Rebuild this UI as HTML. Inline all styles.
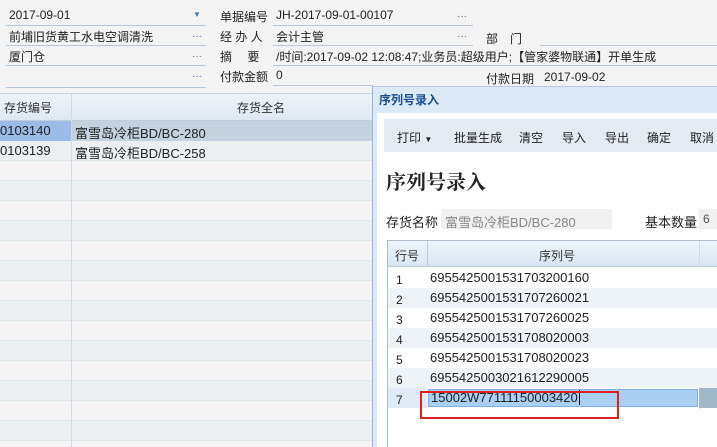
<!DOCTYPE html>
<html><head><meta charset="utf-8"><style>
*{margin:0;padding:0;box-sizing:border-box}
body{width:717px;height:447px;overflow:hidden;background:#f3f3f3;font-family:"Liberation Sans","Noto Sans CJK SC",sans-serif;font-size:12px;color:#222;position:relative}
.a{position:absolute;white-space:nowrap}
.ln{position:absolute;height:1px;background:#b7c7d6}
.dots{position:absolute;color:#4a6a9a;font-size:10px}
.sn{font-size:13px}
</style></head><body>
<div class="a" style="left:9px;top:8px">2017-09-01</div>
<div class="a" style="left:193px;top:10px;color:#4a7cc0;font-size:8px">▼</div>
<div class="ln" style="left:6px;top:25px;width:200px"></div>
<div class="a" style="left:9px;top:28px">前埔旧货黄工水电空调清洗</div>
<div class="dots" style="left:192px;top:31px">···</div>
<div class="ln" style="left:6px;top:45px;width:200px"></div>
<div class="a" style="left:9px;top:48px">厦门仓</div>
<div class="dots" style="left:192px;top:51px">···</div>
<div class="ln" style="left:6px;top:65px;width:200px"></div>
<div class="dots" style="left:192px;top:71px">···</div>
<div class="ln" style="left:6px;top:87px;width:200px"></div>

<div class="a" style="left:220px;top:8px">单据编号</div>
<div class="a" style="left:276px;top:8px">JH-2017-09-01-00107</div>
<div class="dots" style="left:457px;top:11px">···</div>
<div class="ln" style="left:273px;top:25px;width:200px"></div>
<div class="a" style="left:220px;top:28px">经 办 人</div>
<div class="a" style="left:276px;top:28px">会计主管</div>
<div class="dots" style="left:457px;top:31px">···</div>
<div class="ln" style="left:273px;top:45px;width:200px"></div>
<div class="a" style="left:486px;top:30px">部　门</div>
<div class="ln" style="left:540px;top:45px;width:177px"></div>
<div class="a" style="left:220px;top:48px">摘　 要</div>
<div class="a" style="left:276px;top:48px">/时间:2017-09-02 12:08:47;业务员:超级用户;【管家婆物联通】开单生成</div>
<div class="ln" style="left:273px;top:65px;width:444px"></div>
<div class="a" style="left:220px;top:68px">付款金额</div>
<div class="a" style="left:276px;top:68px">0</div>
<div class="ln" style="left:273px;top:85px;width:100px"></div>
<div class="a" style="left:486px;top:70px">付款日期</div>
<div class="a" style="left:544px;top:70px">2017-09-02</div>

<div class="a" style="left:0;top:93px;width:380px;height:28px;background:linear-gradient(#eef3f8,#dfe8f1);border-top:1px solid #c8d4df;border-bottom:1px solid #c0ccd8"></div>
<div class="a" style="left:4px;top:99px;color:#333">存货编号</div>
<div class="a" style="left:237px;top:99px;color:#333">存货全名</div>
<div class="a" style="left:0;top:121px;width:72px;height:20px;background:#9bbbe8"></div>
<div class="a" style="left:72px;top:121px;width:310px;height:20px;background:#c3d2de"></div>
<div class="a" style="left:0;top:141px;width:380px;height:306px;background:repeating-linear-gradient(#eceff1 0 19px,#dde3e8 19px 20px,#f4f4f4 20px 39px,#dde3e8 39px 40px)"></div>
<div class="a" style="left:71px;top:93px;width:1px;height:354px;background:#cfdae4"></div>
<div class="a sn" style="left:0;top:123px">0103140</div>
<div class="a sn" style="left:75px;top:123px">富雪岛冷柜BD/BC-280</div>
<div class="a sn" style="left:0;top:143px">0103139</div>
<div class="a sn" style="left:75px;top:143px">富雪岛冷柜BD/BC-258</div>

<div class="a" style="left:372px;top:86px;width:345px;height:361px;background:#dce9f6;border-left:1px solid #9cb8d8;border-top:1px solid #b5cbe2"></div>
<div class="a" style="left:379px;top:91px;color:#1d4f8f;font-weight:bold;font-size:12px">序列号录入</div>
<div class="a" style="left:377px;top:113px;width:340px;height:334px;background:#fff"></div>
<div class="a" style="left:384px;top:119px;width:333px;height:33px;background:#e4ebf2"></div>
<div class="a" style="left:397px;top:129px">打印 <span style="font-size:8px">▼</span></div>
<div class="a" style="left:454px;top:129px">批量生成</div>
<div class="a" style="left:519px;top:129px">清空</div>
<div class="a" style="left:562px;top:129px">导入</div>
<div class="a" style="left:605px;top:129px">导出</div>
<div class="a" style="left:647px;top:129px">确定</div>
<div class="a" style="left:690px;top:129px">取消</div>
<div class="a" style="left:386px;top:166px;font-size:20px;font-weight:bold;font-family:'Liberation Serif','Noto Serif CJK SC',serif">序列号录入</div>
<div class="a" style="left:386px;top:212px;font-size:13px">存货名称</div>
<div class="a" style="left:441px;top:209px;width:171px;height:20px;background:#f0f0f0"></div>
<div class="a" style="left:445px;top:212px;color:#888;font-size:13px">富雪岛冷柜BD/BC-280</div>
<div class="a" style="left:645px;top:212px;font-size:13px">基本数量</div>
<div class="a" style="left:699px;top:209px;width:18px;height:20px;background:#f0f0f0"></div>
<div class="a" style="left:703px;top:212px;color:#555">6</div>
<div class="a" style="left:387px;top:240px;width:330px;height:207px;border-left:1px solid #aebfd0;border-top:1px solid #aebfd0"></div>
<div class="a" style="left:388px;top:241px;width:329px;height:26px;background:linear-gradient(#eef4fa,#d9e6f2);border-bottom:1px solid #b9cadb"></div>
<div class="a" style="left:427px;top:241px;width:1px;height:26px;background:#b9cadb"></div>
<div class="a" style="left:699px;top:241px;width:1px;height:168px;background:#cfdce8"></div>
<div class="a" style="left:395px;top:247px;color:#333">行号</div>
<div class="a" style="left:539px;top:247px;color:#333">序列号</div>
<div class="a" style="left:388px;top:268px;width:329px;height:140px;background:repeating-linear-gradient(#fff 0 20px,#eef3f7 20px 40px)"></div>
<div class="a" style="left:388px;top:388px;width:39px;height:20px;background:#e0ebf5"></div>
<div class="a" style="left:428px;top:389px;width:270px;height:18px;background:#a9cff2;border:1px solid #7fb0e0"></div>
<div class="a" style="left:699px;top:388px;width:18px;height:20px;background:#9fb8cc"></div>
<div class="a" style="left:396px;top:273px">1</div><div class="a sn" style="left:430px;top:270px">6955425001531703200160</div>
<div class="a" style="left:396px;top:293px">2</div><div class="a sn" style="left:430px;top:290px">6955425001531707260021</div>
<div class="a" style="left:396px;top:313px">3</div><div class="a sn" style="left:430px;top:310px">6955425001531707260025</div>
<div class="a" style="left:396px;top:333px">4</div><div class="a sn" style="left:430px;top:330px">6955425001531708020003</div>
<div class="a" style="left:396px;top:353px">5</div><div class="a sn" style="left:430px;top:350px">6955425001531708020023</div>
<div class="a" style="left:396px;top:373px">6</div><div class="a sn" style="left:430px;top:370px">6955425003021612290005</div>
<div class="a" style="left:396px;top:393px">7</div><div class="a sn" style="left:431px;top:390px">15002W77111150003420<span style="border-left:1px solid #000;margin-left:1px"></span></div>
<div class="a" style="left:420px;top:391px;width:199px;height:28px;border:2px solid #e02020"></div>
</body></html>
